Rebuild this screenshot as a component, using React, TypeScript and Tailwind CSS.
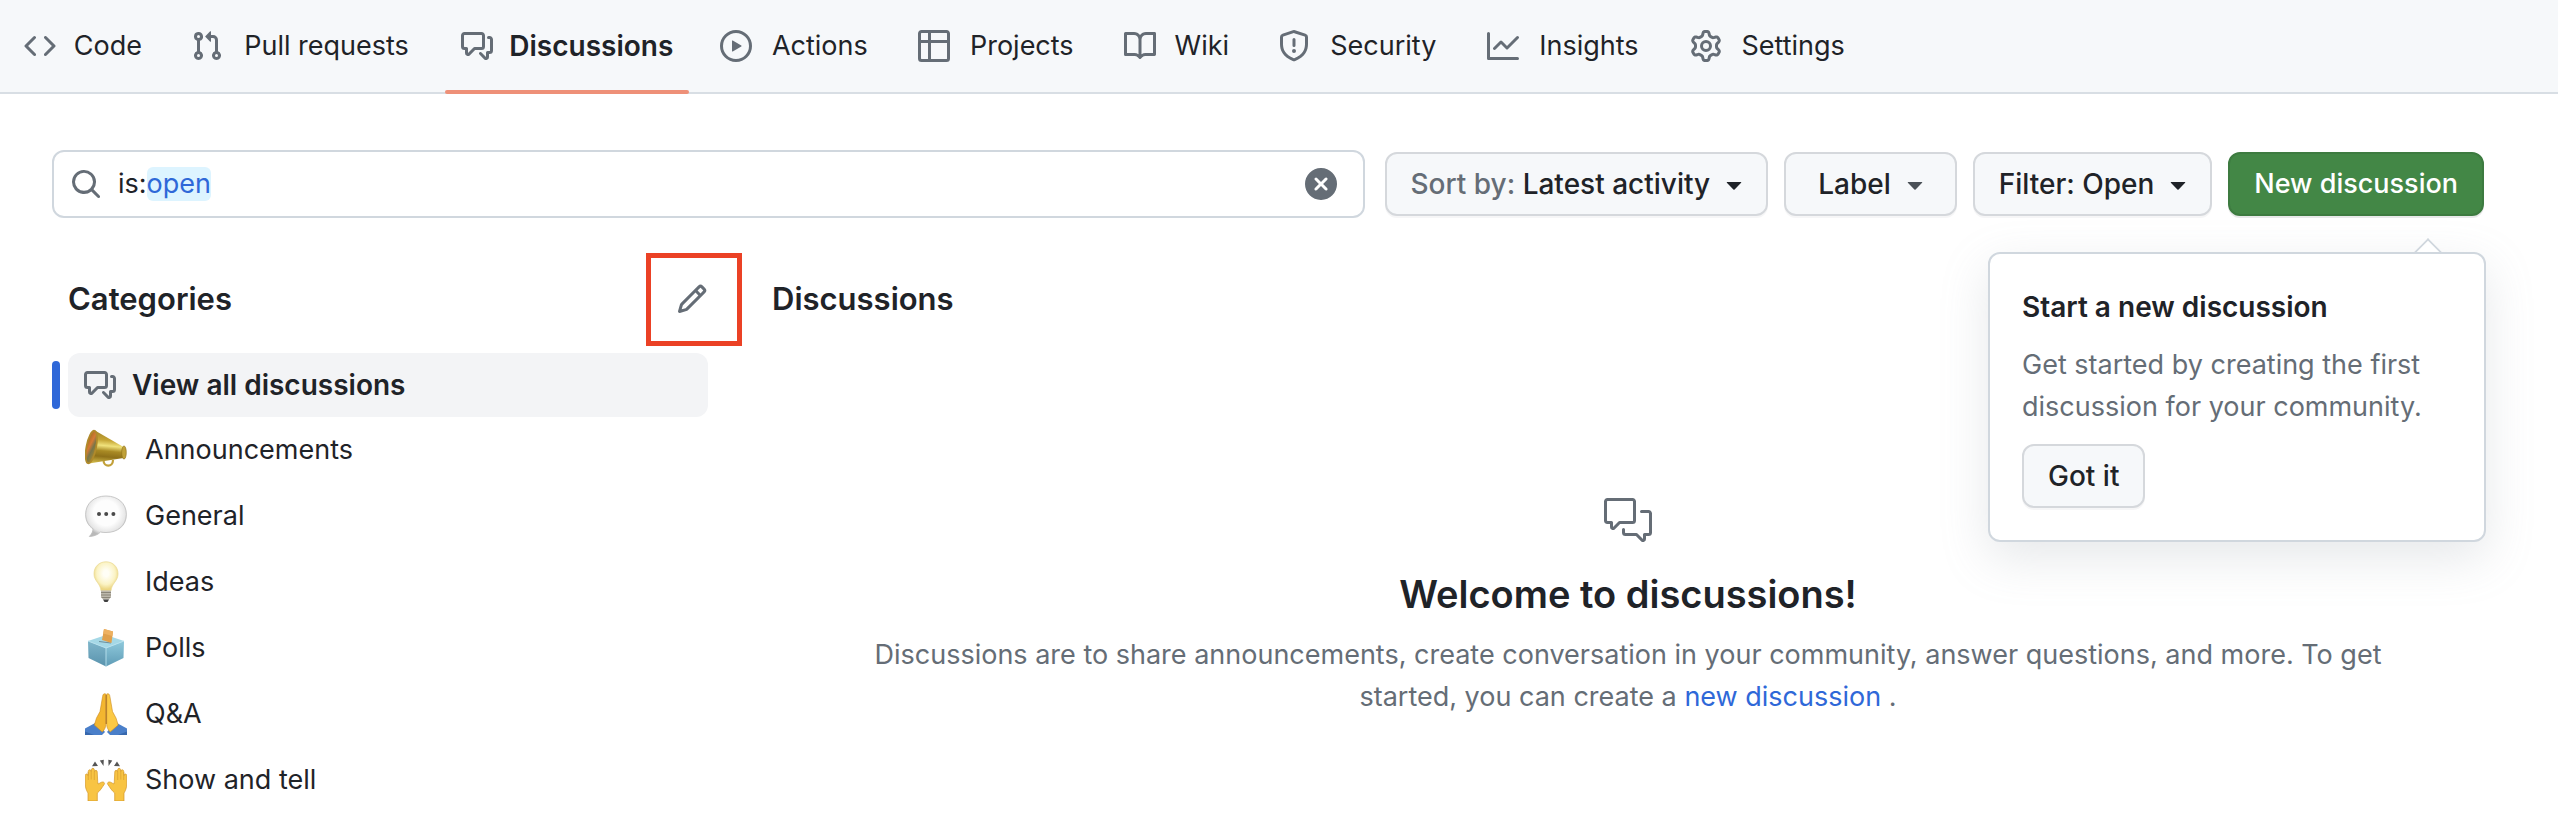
import React, { useState } from "react";
import { GoCommentDiscussion } from "react-icons/go";

const paths = {
  code: "m11.28 3.22 4.25 4.25a.75.75 0 0 1 0 1.06l-4.25 4.25a.749.749 0 0 1-1.275-.326.749.749 0 0 1 .215-.734L13.94 8l-3.72-3.72a.749.749 0 0 1 .326-1.275.749.749 0 0 1 .734.215Zm-6.56 0a.751.751 0 0 1 1.042.018.751.751 0 0 1 .018 1.042L2.06 8l3.72 3.72a.749.749 0 0 1-.326 1.275.749.749 0 0 1-.734-.215L.47 8.53a.75.75 0 0 1 0-1.06Z",
  pull: "M7.177 3.073L9.573.677A.25.25 0 0110 .854v4.792a.25.25 0 01-.427.177L7.177 3.427a.25.25 0 010-.354zM3.75 2.5a.75.75 0 100 1.5.75.75 0 000-1.5zm-2.25.75a2.25 2.25 0 113 2.122v5.256a2.251 2.251 0 11-1.5 0V5.372A2.25 2.25 0 011.5 3.25zM11 2.5h-1V4h1a1 1 0 011 1v5.628a2.251 2.251 0 101.5 0V5A2.5 2.5 0 0011 2.5zm1 10.25a.75.75 0 111.5 0 .75.75 0 01-1.5 0zM3.75 12a.75.75 0 100 1.5.75.75 0 000-1.5z",
  discussion:
    "M1.75 1h8.5c.966 0 1.75.784 1.75 1.75v5.5A1.75 1.75 0 0 1 10.25 10H7.061l-2.574 2.573A1.458 1.458 0 0 1 2 11.543V10h-.25A1.75 1.75 0 0 1 0 8.25v-5.5C0 1.784.784 1 1.75 1ZM1.5 2.75v5.5c0 .138.112.25.25.25h1a.75.75 0 0 1 .75.75v2.19l2.72-2.72a.749.749 0 0 1 .53-.22h3.5a.25.25 0 0 0 .25-.25v-5.5a.25.25 0 0 0-.25-.25h-8.5a.25.25 0 0 0-.25.25Zm13 2a.25.25 0 0 0-.25-.25h-.5a.75.75 0 0 1 0-1.5h.5c.966 0 1.75.784 1.75 1.75v5.5A1.75 1.75 0 0 1 14.25 12H14v1.543a1.458 1.458 0 0 1-2.487 1.03L9.22 12.28a.749.749 0 0 1 .326-1.275.749.749 0 0 1 .734.215l2.22 2.22v-2.19a.75.75 0 0 1 .75-.75h1a.25.25 0 0 0 .25-.25Z",
  play: "M8 0a8 8 0 1 1 0 16A8 8 0 0 1 8 0ZM1.5 8a6.5 6.5 0 1 0 13 0 6.5 6.5 0 0 0-13 0Zm4.879-2.773 4.264 2.559a.25.25 0 0 1 0 .428l-4.264 2.559A.25.25 0 0 1 6 10.559V5.442a.25.25 0 0 1 .379-.215Z",
  table:
    "M0 1.75C0 .784.784 0 1.75 0h12.5C15.216 0 16 .784 16 1.75v12.5A1.75 1.75 0 0 1 14.25 16H1.75A1.75 1.75 0 0 1 0 14.25ZM6.5 6.5v8h7.75a.25.25 0 0 0 .25-.25V6.5Zm8-1.5V1.75a.25.25 0 0 0-.25-.25H6.5V5Zm-13 1.5v7.75c0 .138.112.25.25.25H5v-8ZM5 5V1.5H1.75a.25.25 0 0 0-.25.25V5Z",
  book: "M0 1.75A.75.75 0 0 1 .75 1h4.253c1.227 0 2.317.59 3 1.501A3.743 3.743 0 0 1 11.006 1h4.245a.75.75 0 0 1 .75.75v10.5a.75.75 0 0 1-.75.75h-4.507a2.25 2.25 0 0 0-1.591.659l-.622.621a.75.75 0 0 1-1.06 0l-.622-.621A2.25 2.25 0 0 0 5.258 13H.75a.75.75 0 0 1-.75-.75Zm7.251 10.324.004-5.073-.002-2.253A2.25 2.25 0 0 0 5.003 2.5H1.5v9h3.757a3.75 3.75 0 0 1 1.994.574ZM8.755 4.75l-.004 7.322a3.752 3.752 0 0 1 1.992-.572H14.5v-9h-3.495a2.25 2.25 0 0 0-2.25 2.25Z",
  shield:
    "M7.467.133a1.748 1.748 0 0 1 1.066 0l5.25 1.68A1.75 1.75 0 0 1 15 3.48V7c0 1.566-.32 3.182-1.303 4.682-.983 1.498-2.585 2.813-5.032 3.855a1.697 1.697 0 0 1-1.33 0c-2.447-1.042-4.049-2.357-5.032-3.855C1.32 10.182 1 8.566 1 7V3.48a1.75 1.75 0 0 1 1.217-1.667Zm.61 1.429a.25.25 0 0 0-.153 0l-5.25 1.68a.25.25 0 0 0-.174.238V7c0 1.358.275 2.666 1.057 3.86.784 1.194 2.121 2.34 4.366 3.297a.196.196 0 0 0 .154 0c2.245-.956 3.582-2.104 4.366-3.298C13.225 9.666 13.5 8.36 13.5 7V3.48a.251.251 0 0 0-.174-.237l-5.25-1.68ZM8.75 4.75v3a.75.75 0 0 1-1.5 0v-3a.75.75 0 0 1 1.5 0ZM9 10.5a1 1 0 1 1-2 0 1 1 0 0 1 2 0Z",
  graph:
    "M1.5 1.75V13.5h13.75a.75.75 0 0 1 0 1.5H.75a.75.75 0 0 1-.75-.75V1.75a.75.75 0 0 1 1.5 0Zm14.28 2.53-5.25 5.25a.75.75 0 0 1-1.06 0L7 7.06 4.28 9.78a.751.751 0 0 1-1.042-.018.751.751 0 0 1-.018-1.042l3.25-3.25a.75.75 0 0 1 1.06 0L10 7.94l4.72-4.72a.751.751 0 0 1 1.042.018.751.751 0 0 1 .018 1.042Z",
  gear: "M8 0a8.2 8.2 0 0 1 .701.031C9.444.095 9.99.645 10.16 1.29l.288 1.107c.018.066.079.158.212.224.231.114.454.243.668.386.123.082.233.09.299.071l1.103-.303c.644-.176 1.392.021 1.82.63.27.385.506.792.704 1.218.315.675.111 1.422-.364 1.891l-.814.806c-.049.048-.098.147-.088.294.016.257.016.515 0 .772-.01.147.038.246.088.294l.814.806c.475.469.679 1.216.364 1.891a7.977 7.977 0 0 1-.704 1.217c-.428.61-1.176.807-1.82.63l-1.102-.302c-.067-.019-.177-.011-.3.071a5.909 5.909 0 0 1-.668.386c-.133.066-.194.158-.211.224l-.29 1.106c-.168.646-.715 1.196-1.458 1.26a8.006 8.006 0 0 1-1.402 0c-.743-.064-1.289-.614-1.458-1.26l-.289-1.106c-.018-.066-.079-.158-.212-.224a5.738 5.738 0 0 1-.668-.386c-.123-.082-.233-.09-.299-.071l-1.103.303c-.644.176-1.392-.021-1.82-.63a8.12 8.12 0 0 1-.704-1.218c-.315-.675-.111-1.422.363-1.891l.815-.806c.05-.048.098-.147.088-.294a6.214 6.214 0 0 1 0-.772c.01-.147-.038-.246-.088-.294l-.815-.806C.635 6.045.431 5.298.746 4.623a7.92 7.92 0 0 1 .704-1.217c.428-.61 1.176-.807 1.82-.63l1.102.302c.067.019.177.011.3-.071.214-.143.437-.272.668-.386.133-.066.194-.158.211-.224l.29-1.106C6.009.645 6.556.095 7.299.03 7.53.01 7.764 0 8 0Zm-.571 1.525c-.036.003-.108.036-.137.146l-.289 1.105c-.147.561-.549.967-.998 1.189-.173.086-.34.183-.5.29-.417.278-.97.423-1.529.27l-1.103-.303c-.109-.03-.175.016-.195.045-.22.312-.412.644-.573.99-.014.031-.021.11.059.19l.815.806c.411.406.562.957.53 1.456a4.709 4.709 0 0 0 0 .582c.032.499-.119 1.05-.53 1.456l-.815.806c-.081.08-.073.159-.059.19.162.346.353.677.573.989.02.03.085.076.195.046l1.102-.303c.56-.153 1.113-.008 1.53.27.161.107.328.204.501.29.447.222.85.629.997 1.189l.289 1.105c.029.109.101.143.137.146a6.6 6.6 0 0 0 1.142 0c.036-.003.108-.036.137-.146l.289-1.105c.147-.561.549-.967.998-1.189.173-.086.34-.183.5-.29.417-.278.97-.423 1.529-.27l1.103.303c.109.029.175-.016.195-.045.22-.313.411-.644.573-.99.014-.031.021-.11-.059-.19l-.815-.806c-.411-.406-.562-.957-.53-1.456a4.709 4.709 0 0 0 0-.582c-.032-.499.119-1.05.53-1.456l.815-.806c.081-.08.073-.159.059-.19a6.464 6.464 0 0 0-.573-.989c-.02-.03-.085-.076-.195-.046l-1.102.303c-.56.153-1.113.008-1.53-.27a4.44 4.44 0 0 0-.501-.29c-.447-.222-.85-.629-.997-1.189l-.289-1.105c-.029-.11-.101-.143-.137-.146a6.6 6.6 0 0 0-1.142 0ZM11 8a3 3 0 1 1-6 0 3 3 0 0 1 6 0ZM9.5 8a1.5 1.5 0 1 0-3.001.001A1.5 1.5 0 0 0 9.5 8Z",
  pencil:
    "M11.013 1.427a1.75 1.75 0 0 1 2.474 0l1.086 1.086a1.75 1.75 0 0 1 0 2.474l-8.61 8.61c-.21.21-.47.364-.756.445l-3.251.93a.75.75 0 0 1-.927-.928l.929-3.25c.081-.286.235-.547.445-.758l8.61-8.61Zm.176 4.823L9.75 4.81l-6.286 6.287a.253.253 0 0 0-.064.108l-.558 1.953 1.953-.558a.253.253 0 0 0 .108-.064Zm1.238-3.763a.25.25 0 0 0-.354 0L10.811 3.75l1.439 1.44 1.263-1.263a.25.25 0 0 0 0-.354Z",
  search:
    "M10.68 11.74a6 6 0 0 1-7.922-8.982 6 6 0 0 1 8.982 7.922l3.04 3.04a.749.749 0 0 1-.326 1.275.749.749 0 0 1-.734-.215ZM11.5 7a4.499 4.499 0 1 0-8.997 0A4.499 4.499 0 0 0 11.5 7Z",
  clear:
    "M2.343 13.657A8 8 0 1 1 13.658 2.343 8 8 0 0 1 2.343 13.657ZM6.03 4.97a.751.751 0 0 0-1.042.018.751.751 0 0 0-.018 1.042L6.94 8 4.97 9.97a.749.749 0 0 0 .326 1.275.749.749 0 0 0 .734-.215L8 9.06l1.97 1.97a.749.749 0 0 0 1.275-.326.749.749 0 0 0-.215-.734L9.06 8l1.97-1.97a.749.749 0 0 0-.326-1.275.749.749 0 0 0-.734.215L8 6.94Z",
  caret:
    "m4.427 7.427 3.396 3.396a.25.25 0 0 0 .354 0l3.396-3.396A.25.25 0 0 0 11.396 7H4.604a.25.25 0 0 0-.177.427Z",
};

function Icon({ name, className = "" }: { name: keyof typeof paths; className?: string }) {
  return (
    <svg viewBox="0 0 16 16" aria-hidden="true" className={`size-8 shrink-0 fill-current ${className}`}>
      <path d={paths[name]} />
    </svg>
  );
}

const tabs: { label: string; icon: keyof typeof paths }[] = [
  { label: "Code", icon: "code" },
  { label: "Pull requests", icon: "pull" },
  { label: "Discussions", icon: "discussion" },
  { label: "Actions", icon: "play" },
  { label: "Projects", icon: "table" },
  { label: "Wiki", icon: "book" },
  { label: "Security", icon: "shield" },
  { label: "Insights", icon: "graph" },
  { label: "Settings", icon: "gear" },
];

function Megaphone() {
  return (
    <>
      <defs>
        <linearGradient id="brass" x1=".1" y1="0" x2="0" y2="1">
          <stop offset="0" stopColor="#a3852a" />
          <stop offset=".25" stopColor="#c5a534" />
          <stop offset=".42" stopColor="#f0e27c" />
          <stop offset=".58" stopColor="#a98a24" />
          <stop offset=".75" stopColor="#8f7119" />
          <stop offset="1" stopColor="#dcc552" />
        </linearGradient>
        <linearGradient id="bell" x1="0" y1="0" x2="1" y2="1">
          <stop offset="0" stopColor="#8f6a1a" />
          <stop offset=".4" stopColor="#d67a35" />
          <stop offset=".6" stopColor="#77754a" />
          <stop offset="1" stopColor="#b98f22" />
        </linearGradient>
      </defs>
      <path d="M18.500 31c0 7.500 9.500 7.500 9.500 0" fill="none" stroke="#c2a03a" strokeWidth="2.200" />
      <path d="M10 1.500 38.500 18c1.500 3 1.500 8 0 11L4 34.500Z" fill="url(#brass)" />
      <ellipse cx="39" cy="23.500" rx="2.300" ry="6.600" fill="#c0a138" stroke="#8c6d18" strokeWidth=".6" />
      <ellipse cx="6.300" cy="18" rx="4.800" ry="16.500" transform="rotate(11 6.300 18)" fill="url(#bell)" stroke="#b08a2b" strokeWidth="1.800" />
    </>
  );
}

function Bubble() {
  return (
    <>
      <defs>
        <radialGradient id="bubble" cx=".5" cy=".42" r=".56">
          <stop offset=".55" stopColor="#fdfdfd" />
          <stop offset=".85" stopColor="#e6e6e6" />
          <stop offset="1" stopColor="#b9b9b9" />
        </radialGradient>
      </defs>
      <path
        d="M21 1C9 1 .6 8.500.6 19.500c0 6.500 3 11.500 7.400 14.300 0 3-1.500 5.500-3.700 7.700 5 0 9-2.200 11.200-4.500 1.600.4 3.500.5 5.500.5 12 0 20.400-7 20.400-18S33 1 21 1Z"
        fill="url(#bubble)"
        stroke="#bdbdbd"
        strokeWidth=".8"
      />
      <circle cx="14" cy="19" r="2" fill="#4a4a4a" />
      <circle cx="21.200" cy="19" r="2" fill="#4a4a4a" />
      <circle cx="28.400" cy="19" r="2" fill="#4a4a4a" />
    </>
  );
}

function Bulb() {
  return (
    <>
      <defs>
        <radialGradient id="glass" cx=".5" cy=".4" r=".55">
          <stop offset=".2" stopColor="#fffef6" />
          <stop offset=".7" stopColor="#fbf3c4" />
          <stop offset="1" stopColor="#ecd682" />
        </radialGradient>
      </defs>
      <path d="M21 .8c-7 0-12 5-12 12 0 7.500 6.500 9.500 7 17h10c.5-7.500 7-9.500 7-17 0-7-5-12-12-12Z" fill="url(#glass)" stroke="#ead88f" strokeWidth=".7" />
      <path d="M16 29.500h10v6.500l-2 2.500h-6l-2-2.500Z" fill="#bdb8ac" />
      <path d="M16 31.500h10M16 34h10M16.500 36.500h9" stroke="#8b8679" strokeWidth="1" />
      <path d="M18 38.500h6l-1.500 2.500h-3Z" fill="#3f3f3f" />
    </>
  );
}

function BallotBox() {
  return (
    <>
      <defs>
        <linearGradient id="left" x1="0" y1="0" x2="0" y2="1">
          <stop offset="0" stopColor="#7fb6cb" />
          <stop offset="1" stopColor="#5a93ad" />
        </linearGradient>
        <linearGradient id="right" x1="0" y1="0" x2="0" y2="1">
          <stop offset="0" stopColor="#8fc9dc" />
          <stop offset="1" stopColor="#5f9cb6" />
        </linearGradient>
      </defs>
      <path d="M3 14 21 8l18 6-18 7Z" fill="#a5d8e6" />
      <path d="m3 14 18 7v18.500L3.500 31Z" fill="url(#left)" />
      <path d="m39 14-18 7v18.500L38.500 31Z" fill="url(#right)" />
      <path d="m3 14 18 7 18-7M21 21v18.500" fill="none" stroke="#b9e2ee" strokeWidth=".9" />
      <path d="m14 14.500 12 1.500" stroke="#6f8f9a" strokeWidth="1.200" />
      <path d="m19 2 9 2.500L26.500 16 17 13Z" fill="#e0a04c" />
      <path d="m19 2 9 2.500-.6 4.500L18.200 6.500Z" fill="#eeb161" />
    </>
  );
}

function Pray() {
  return (
    <>
      <path d="M0 35.500 12 29l8 10-3 3H0Z" fill="#4a7fc9" />
      <path d="M42 35.500 30 29l-8 10 3 3h17Z" fill="#4a7fc9" />
      <path d="M0 38.500 9 42H0ZM42 38.500 33 42h9Z" fill="#3768ad" />
      <path d="M20.800 1c-2-1-3 .5-3.200 2.500L15 18.500l-3.500 6.500-2.200 7 8 7c2.500-2.500 3.500-5 3.500-7.500Z" fill="#f3b62f" stroke="#cb8a1f" strokeWidth=".6" />
      <path d="M21.700 1c2-1 3 .5 3.200 2.500l2.600 15 3.500 6.500 2.200 7-8 7c-2.500-2.500-3.500-5-3.500-7.500Z" fill="#fbc945" stroke="#cb8a1f" strokeWidth=".6" />
      <path d="M21.200 2v29" stroke="#a96c15" strokeWidth="1" />
    </>
  );
}

function Hand() {
  return (
    <path
      d="M3 42V34C1 31 .3 28 .3 25v-8.500c0-2 2.400-2 2.600 0l.4-4.200c.2-2 2.700-2 2.800 0l.3-1.600c.3-1.900 2.700-1.900 2.900 0l.3 1.900c.4-1.800 2.600-1.600 2.600.3l.5 9.600.3 2.500 3.500-1.800c2-.8 3.800.7 2.700 2.200C17 28.500 15 32 12.300 34v8Z"
      fill="#f8c443"
      stroke="#d2962a"
      strokeWidth=".7"
    />
  );
}

function RaisedHands() {
  return (
    <>
      <Hand />
      <g transform="translate(42 0) scale(-1 1)">
        <Hand />
      </g>
      <path d="M3.300 13v8M6.200 11.500v9M9.300 12.500v8.500M38.700 13v8M35.800 11.500v9M32.700 12.500v8.500" stroke="#d99f2f" strokeWidth=".7" />
      <path d="m10 2.500 3 4.500-6 .3ZM14.800 1.500l4-.8-.3 6.300ZM23.300.7l4 .8-3.700 5.500ZM32 2.500l3 4.800-6-.3Z" fill="#555" />
    </>
  );
}

const categories = [
  { label: "Announcements", Art: Megaphone },
  { label: "General", Art: Bubble },
  { label: "Ideas", Art: Bulb },
  { label: "Polls", Art: BallotBox },
  { label: "Q&A", Art: Pray },
  { label: "Show and tell", Art: RaisedHands },
];

const buttonBase =
  "flex h-16 shrink-0 items-center rounded-xl border-2 border-[#d5d8dc] bg-[#f6f8fa] font-medium whitespace-nowrap shadow-[0_2px_0_rgba(31,35,40,0.04)]";

export default function App() {
  const [query, setQuery] = useState("is:open");
  const [tipOpen, setTipOpen] = useState(true);
  const split = query.indexOf(":") + 1;

  return (
    <div className="min-h-screen bg-white font-['Inter',sans-serif] text-[28px] leading-[42px] text-[#1f2328]">
      <nav aria-label="Repository" className="flex gap-[15px] border-b-2 border-[#d8dee4] bg-[#f6f8fa] px-2">
        {tabs.map(({ label, icon }) => {
          const active = label === "Discussions";
          return (
            <a
              key={label}
              href="#"
              aria-current={active ? "page" : undefined}
              className="relative flex h-[92px] items-center gap-4 px-4"
            >
              <Icon name={icon} className="text-[#656d76]" />
              <span
                data-content={label}
                className={`text-center before:invisible before:block before:h-0 before:text-[28px] before:font-semibold before:content-[attr(data-content)] ${
                  active ? "font-semibold" : "text-[27px]"
                }`}
              >
                {label}
              </span>
              {active && <span className="absolute inset-x-0 -bottom-0.5 h-1 rounded-xs bg-[#ee9078]" />}
            </a>
          );
        })}
      </nav>

      <main className="pt-14 pr-[74px] pl-[52px]">
        <div className="flex items-center gap-4">
          <div className="mr-1 flex h-[68px] min-w-0 flex-1 items-center gap-4 rounded-xl border-2 border-[#d0d7de] pr-[26px] pl-4">
            <Icon name="search" className="text-[#656d76]" />
            <div className="relative min-w-0 flex-1 text-[27px]">
              <div aria-hidden="true" className="pointer-events-none absolute inset-0 flex items-center whitespace-pre">
                {query.slice(0, split)}
                <span className="rounded-md bg-[#ddf4ff] leading-[34px] text-[#2f68d8]">{query.slice(split)}</span>
              </div>
              <input
                aria-label="Search all discussions"
                value={query}
                onChange={(e) => setQuery(e.target.value)}
                className="block w-full bg-transparent text-transparent caret-[#1f2328] outline-none"
              />
            </div>
            <button type="button" aria-label="Clear search" onClick={() => setQuery("")} className="text-[#656d76]">
              <Icon name="clear" />
            </button>
          </div>
          <button type="button" className={`${buttonBase} gap-2 pr-4 pl-6`}>
            <span>
              <span className="text-[#656d76]">Sort by:</span> Latest activity
            </span>
            <Icon name="caret" />
          </button>
          <button type="button" className={`${buttonBase} gap-2 pr-6 pl-8`}>
            Label
            <Icon name="caret" className="text-[#4b5157]" />
          </button>
          <button type="button" className={`${buttonBase} gap-2 pr-4 pl-6`}>
            Filter: Open
            <Icon name="caret" />
          </button>
          <div className="relative">
            <button
              type="button"
              className="flex h-16 items-center rounded-xl border-2 border-[#3d7b40] bg-[#438746] px-6 text-[27px] font-medium whitespace-nowrap text-white shadow-[0_2px_0_rgba(31,35,40,0.1)]"
            >
              New discussion
            </button>
            {tipOpen && (
              <div
                role="dialog"
                aria-label="Start a new discussion"
                className="absolute top-[100px] -right-0.5 w-[498px] rounded-xl border-2 border-[#d0d7de] bg-white p-8 shadow-[0_16px_48px_rgba(140,149,159,0.22)]"
              >
                <span className="absolute -top-3 right-[46px] size-5 rotate-45 border-t-2 border-l-2 border-[#d0d7de] bg-white [clip-path:polygon(0_0,100%_0,0_100%)]" />
                <h2 className="font-semibold">Start a new discussion</h2>
                <p className="mt-4 text-[27px] text-[#656d76]">
                  Get started by creating the first discussion for your community.
                </p>
                <button type="button" onClick={() => setTipOpen(false)} className={`${buttonBase} mt-4 px-6`}>
                  Got it
                </button>
              </div>
            )}
          </div>
        </div>

        <div className="mt-14 flex gap-16">
          <aside className="w-[656px] shrink-0 pl-4">
            <div className="flex h-[50px] items-center justify-between">
              <h2 className="text-[31px] font-semibold">Categories</h2>
              <button type="button" aria-label="Edit categories" className="relative text-[#656d76]">
                <Icon name="pencil" />
                <span className="absolute -top-[30px] -left-[30px] h-[93px] w-24 border-[5px] border-[#eb4125]" />
              </button>
            </div>
            <ul className="mt-[29px]">
              <li className="relative">
                <span className="absolute inset-y-2 -left-4 w-2 rounded-full bg-[#2f68d8]" />
                <a
                  href="#"
                  aria-current="page"
                  className="flex h-16 items-center gap-4 rounded-xl bg-[#f3f4f6] px-4 font-semibold"
                >
                  <Icon name="discussion" className="text-[#656d76]" />
                  View all discussions
                </a>
              </li>
              {categories.map(({ label, Art }) => (
                <li key={label}>
                  <a href="#" className="flex h-[66px] items-center gap-[18px] px-[17px] text-[27px]">
                    <svg viewBox="0 0 42 42" aria-hidden="true" className="size-[42px] shrink-0">
                      <Art />
                    </svg>
                    {label}
                  </a>
                </li>
              ))}
            </ul>
          </aside>

          <section className="min-w-0 flex-1">
            <h2 className="text-[31px] leading-[50px] font-semibold">Discussions</h2>
            <div className="mt-[172px] flex flex-col items-center px-20 text-center">
              <GoCommentDiscussion aria-hidden="true" className="size-12 text-[#656d76]" />
              <h3 className="mt-5 text-[38px] leading-[60px] font-semibold">Welcome to discussions!</h3>
              <p className="mt-2.5 text-[27px] text-[#656d76]">
                Discussions are to share announcements, create conversation in your community, answer questions, and
                more. To get started, you can create a{" "}
                <a href="#" className="text-[#2f68d8]">
                  new discussion
                </a>{" "}
                .
              </p>
            </div>
          </section>
        </div>
      </main>
    </div>
  );
}
